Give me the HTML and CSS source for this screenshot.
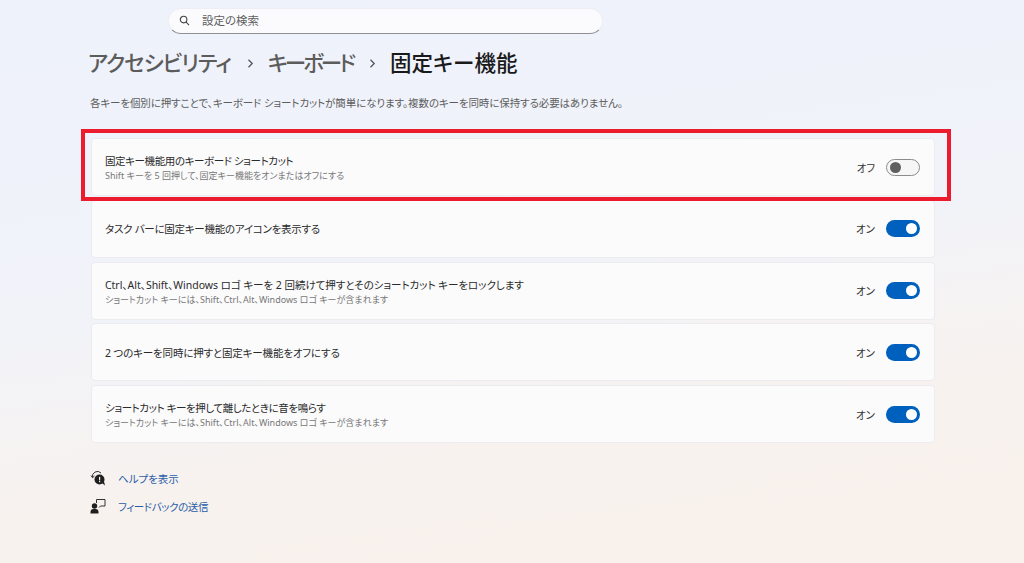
FILE: index.html
```html
<!DOCTYPE html>
<html lang="ja">
<head>
<meta charset="utf-8">
<title>固定キー機能</title>
<link rel="stylesheet" href="styles.css">
</head>
<body>
<div class="search">
  <svg class="search-icon" viewBox="0 0 12 12"><circle cx="5" cy="5" r="3.6"/><path d="M7.7 7.7 11 11"/></svg>
  <span>設定の検索</span>
</div>
<h1 class="crumbs">
  <span class="crumb first">アクセシビリティ</span>
  <svg class="chev" viewBox="0 0 7 9"><path d="M1.500 .8 5.200 4.500 1.500 8.200"/></svg>
  <span class="crumb second">キーボード</span>
  <svg class="chev" viewBox="0 0 7 9"><path d="M1.500 .8 5.200 4.500 1.500 8.200"/></svg>
  <span class="current">固定キー機能</span>
</h1>
<p class="lead">各キーを個別に押すことで、キーボード ショートカットが簡単になります。複数のキーを同時に保持する必要はありません。</p>
<div class="list">
  <div class="highlight"></div>
  <div class="card">
    <div class="text"><div class="title tight">固定キー機能用のキーボード ショートカット</div><div class="sub">Shift キーを 5 回押して、固定キー機能をオンまたはオフにする</div></div>
    <span class="state">オフ</span><span class="toggle off"></span>
  </div>
  <div class="card">
    <div class="text"><div class="title snug">タスク バーに固定キー機能のアイコンを表示する</div></div>
    <span class="state">オン</span><span class="toggle"></span>
  </div>
  <div class="card">
    <div class="text"><div class="title faint">Ctrl、Alt、Shift、Windows ロゴ キーを 2 回続けて押すとそのショートカット キーをロックします</div><div class="sub">ショートカット キーには、Shift、Ctrl、Alt、Windows ロゴ キーが含まれます</div></div>
    <span class="state">オン</span><span class="toggle"></span>
  </div>
  <div class="card">
    <div class="text"><div class="title slight">2 つのキーを同時に押すと固定キー機能をオフにする</div></div>
    <span class="state">オン</span><span class="toggle"></span>
  </div>
  <div class="card">
    <div class="text"><div class="title tight">ショートカット キーを押して離したときに音を鳴らす</div><div class="sub">ショートカット キーには、Shift、Ctrl、Alt、Windows ロゴ キーが含まれます</div></div>
    <span class="state">オン</span><span class="toggle"></span>
  </div>
</div>
<div class="links">
  <a class="link">
    <svg class="link-icon" viewBox="0 0 16 16"><path class="line" d="M2.500 7.500A5 5 0 0 1 11 3"/><path class="line" d="M1 5.500l1.500 2.200L4.500 6"/><circle class="fill" cx="9.500" cy="9.500" r="5"/><path class="fill" d="M12 13l3 2.500-1-4z"/><rect class="mark" x="9" y="6.800" width="1.200" height="3.600"/><rect class="mark" x="9" y="11" width="1.200" height="1.200"/></svg>
    <span>ヘルプを表示</span>
  </a>
  <a class="link">
    <svg class="link-icon" viewBox="0 0 16 16"><circle class="fill" cx="4.500" cy="8" r="2.700"/><path class="fill" d="M0.500 15.500v-1.500a3 3 0 0 1 3-3h2a3 3 0 0 1 3 3v1.500z"/><path class="line" d="M6.500 5V1.500h8.500v6.500H10.500l-1.500 1.500"/></svg>
    <span class="tight">フィードバックの送信</span>
  </a>
</div>
</body>
</html>
```
FILE: styles.css
```css
* { box-sizing: border-box; }
html, body { height: 100%; }
body {
  margin: 0;
  padding: 8px 90px 0 90px;
  overflow: hidden;
  font-family: "Noto Sans", "Noto Sans CJK JP", sans-serif;
  font-feature-settings: "palt";
  color: #1b1b1b;
  background: linear-gradient(172deg, #eef2fb 0%, #f1f3f9 45%, #f8f2ee 75%, #f8f1ec 100%);
}
.search {
  display: flex;
  align-items: center;
  gap: 12px;
  width: 435px;
  height: 26px;
  margin-left: 78px;
  padding: 0 0 2px 10px;
  background: #fbfbfd;
  border: 1px solid #eceef3;
  border-bottom-color: #8f9094;
  border-radius: 13px;
  font-size: 11.500px;
  color: #5f5f5f;
}
.search-icon { width: 11px; height: 11px; fill: none; stroke: #444; stroke-width: 1.200; }
.crumbs {
  display: flex;
  align-items: center;
  margin: 12px 0 0 -2px;
  height: 34px;
  font-size: 21.500px;
  font-weight: 400;
  line-height: 34px;
}
.crumb { color: #5c5c5c; font-weight: 500; }
.first { letter-spacing: -1px; }
.second { letter-spacing: -3px; }
.current { font-weight: 500; color: #1a1a1a; }
.chev { width: 7px; height: 9px; margin: 0 14px 0 16px; fill: none; stroke: #555; stroke-width: 1.300; }
.lead {
  margin: 15px 0 0 0;
  height: 16px;
  font-size: 10.500px;
  line-height: 16px;
  letter-spacing: -0.1px;
  color: #5d5d5d;
}
.list {
  position: relative;
  display: flex;
  flex-direction: column;
  gap: 3.750px;
  width: 844px;
  margin: 27px 0 0 1px;
}
.highlight {
  position: absolute;
  left: -10px;
  top: -9px;
  width: 870px;
  height: 72px;
  border: 4px solid #ec1c2e;
  z-index: 1;
}
.card {
  display: flex;
  align-items: center;
  height: 58px;
  padding: 0 14px 0 13px;
  background: #fbfbfc;
  border: 1px solid #ececf0;
  border-radius: 4px;
}
.text { flex: 1; padding-top: 2px; }
.title { font-size: 10.500px; line-height: 15px; color: #2a2a2a; }
.sub { font-size: 9px; line-height: 13px; color: #777; }
.tight { letter-spacing: -0.4px; }
.snug { letter-spacing: -0.26px; }
.slight { letter-spacing: -0.15px; }
.faint { letter-spacing: -0.03px; }
.state { font-size: 10.500px; color: #333; margin-right: 11px; }
.toggle {
  position: relative;
  width: 34px;
  height: 17px;
  border-radius: 9px;
  background: #0060bd;
}
.toggle::after {
  content: "";
  position: absolute;
  right: 3px;
  top: 3px;
  width: 11px;
  height: 11px;
  border-radius: 50%;
  background: #fff;
}
.toggle.off { background: #f6f6f7; border: 1px solid #8b8b8b; }
.toggle.off::after { right: auto; left: 3px; top: 2px; background: #5f5f5f; }
.links { display: flex; flex-direction: column; gap: 10px; margin: 26px 0 0 0; }
.link {
  display: flex;
  align-items: center;
  gap: 12px;
  height: 18px;
  font-size: 10.500px;
  color: #2a5ea8;
}
.link-icon { width: 16px; height: 16px; }
.line { fill: none; stroke: #333; stroke-width: 1; }
.fill { fill: #1f1f1f; }
.mark { fill: #f8f1ec; }
```
